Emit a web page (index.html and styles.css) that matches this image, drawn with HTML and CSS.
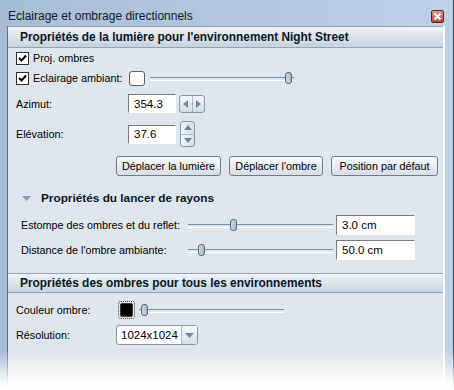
FILE: index.html
```html
<!DOCTYPE html>
<html lang="fr">
<head>
<meta charset="utf-8">
<title>Eclairage et ombrage directionnels</title>
<link rel="stylesheet" href="styles.css">
</head>
<body>
<div class="window">
  <div class="titlebar">
    <span class="title">Eclairage et ombrage directionnels</span>
    <span class="close"><svg width="9" height="9" viewBox="0 0 9 9"><path d="M1.5 1.5 L7.5 7.5 M7.5 1.5 L1.5 7.5" stroke="#fff" stroke-width="2"/></svg></span>
  </div>
  <div class="content">
    <div class="header">Propriétés de la lumière pour l'environnement Night Street</div>

    <div class="row row-check">
      <span class="checkbox"><svg width="11" height="11" viewBox="0 0 11 11"><path d="M2 5 L4.5 7.5 L9 2.5" fill="none" stroke="#000" stroke-width="2"/></svg></span>
      <span>Proj. ombres</span>
    </div>
    <div class="row row-check">
      <span class="checkbox"><svg width="11" height="11" viewBox="0 0 11 11"><path d="M2 5 L4.5 7.5 L9 2.5" fill="none" stroke="#000" stroke-width="2"/></svg></span>
      <span class="ambient-label">Eclairage ambiant:</span>
      <span class="swatch"></span>
      <span class="slider slider-ambient"><span class="thumb" style="left:135px"></span></span>
    </div>

    <div class="row row-az">
      <span class="label w112">Azimut:</span>
      <span class="field w48">354.3</span>
      <span class="spin-h">
        <span class="spin-cell"><svg width="6" height="8" viewBox="0 0 6 8"><path d="M5 0 L5 8 L0 4 Z" fill="#6d86a0"/></svg></span>
        <span class="spin-cell"><svg width="6" height="8" viewBox="0 0 6 8"><path d="M1 0 L1 8 L6 4 Z" fill="#6d86a0"/></svg></span>
      </span>
    </div>

    <div class="row row-el">
      <span class="label w112">Elévation:</span>
      <span class="field w48">37.6</span>
      <span class="spin-v">
        <span class="spin-cell"><svg width="8" height="5" viewBox="0 0 8 5"><path d="M0 5 L8 5 L4 0 Z" fill="#6d86a0"/></svg></span>
        <span class="spin-cell"><svg width="8" height="5" viewBox="0 0 8 5"><path d="M0 0 L8 0 L4 5 Z" fill="#6d86a0"/></svg></span>
      </span>
    </div>

    <div class="row row-buttons">
      <span class="btn b1">Déplacer la lumière</span>
      <span class="btn b2">Déplacer l'ombre</span>
      <span class="btn b3">Position par défaut</span>
    </div>

    <div class="row section">
      <svg class="tri" width="9" height="5" viewBox="0 0 9 5"><path d="M0 0 L9 0 L4.5 5 Z" fill="#8a9bb0"/></svg>
      <span>Propriétés du lancer de rayons</span>
    </div>

    <div class="row row-ray">
      <span class="label w167">Estompe des ombres et du reflet:</span>
      <span class="slider slider-ray"><span class="thumb" style="left:42px"></span></span>
      <span class="field w79">3.0 cm</span>
    </div>
    <div class="row row-ray row-dist">
      <span class="label w167">Distance de l'ombre ambiante:</span>
      <span class="slider slider-ray"><span class="thumb" style="left:10px"></span></span>
      <span class="field w79">50.0 cm</span>
    </div>

    <div class="header header2">Propriétés des ombres pour tous les environnements</div>

    <div class="row row-color">
      <span class="label w102">Couleur ombre:</span>
      <span class="color-focus"><span class="color-black"></span></span>
      <span class="slider slider-color"><span class="thumb" style="left:2px"></span></span>
    </div>
    <div class="row row-res">
      <span class="label w100">Résolution:</span>
      <span class="combo"><span class="combo-text">1024x1024</span><span class="combo-btn"><svg width="9" height="5" viewBox="0 0 9 5"><path d="M0 0 L9 0 L4.5 5 Z" fill="#6d86a0"/></svg></span></span>
    </div>
  </div>
  <div class="fade"></div>
</div>
</body>
</html>
```
FILE: styles.css
```css
* { box-sizing: border-box; }
html, body { margin: 0; padding: 0; }
body {
  width: 454px;
  height: 390px;
  overflow: hidden;
  background: #fff;
  font-family: "Liberation Sans", Arial, sans-serif;
  font-size: 10.8px;
  color: #000;
}
.window {
  position: relative;
  height: 390px;
  display: flex;
  flex-direction: column;
  padding: 0 8px 0 7px;
  background: linear-gradient(to right, #a6bdd6, #bcd2e9);
  border-right: 1px solid #2e4253;
}
.titlebar {
  height: 26px;
  flex: none;
  display: flex;
  align-items: flex-start;
  justify-content: space-between;
}
.title {
  font-size: 12px;
  margin: 9px 0 0 1px;
  color: #0f1a26;
}
.close {
  width: 13px;
  height: 13px;
  margin: 10px 1px 0 0;
  border: 1px solid #5e2525;
  border-radius: 2px;
  background: linear-gradient(#e0968a, #b9473b);
  display: flex;
  align-items: center;
  justify-content: center;
}
.content {
  flex: 1;
  background: #dee6ed;
  border-left: 1px solid #66727e;
  border-right: 2px solid #fff;
  display: flex;
  flex-direction: column;
}
.header {
  height: 22px;
  flex: none;
  display: flex;
  align-items: center;
  padding-left: 12px;
  font-weight: bold;
  font-size: 11.85px;
  color: #0a1624;
  background: linear-gradient(#eef2f7, #c6d4df);
  border-top: 1px solid #95a4b0;
  border-bottom: 1px solid #95a4b0;
}
.header2 {
  height: 20px;
  margin-top: 13px;
  font-size: 11.9px;
}
.row {
  display: flex;
  align-items: center;
  flex: none;
  padding-left: 8px;
  white-space: nowrap;
}
.row-check { height: 20px; }
.checkbox {
  width: 13px;
  height: 13px;
  border: 1px solid #2f2f2f;
  background: #fff;
  display: flex;
  align-items: center;
  justify-content: center;
  margin-right: 4px;
  flex: none;
}
.ambient-label { width: 96px; flex: none; }
.swatch {
  width: 16px;
  height: 15px;
  border: 1px solid #55626e;
  border-radius: 3px;
  background: #fff;
  margin-right: 5px;
  flex: none;
}
.slider {
  position: relative;
  height: 14px;
  display: block;
  flex: none;
}
.slider::before {
  content: "";
  position: absolute;
  left: 0;
  right: 0;
  top: 6px;
  height: 2px;
  border-top: 1px solid #7a92a6;
  border-bottom: 1px solid #fff;
}
.thumb {
  position: absolute;
  top: 1px;
  width: 7px;
  height: 12px;
  border: 1px solid #566a7c;
  border-radius: 3px;
  background: linear-gradient(to right, #c9d6e2, #a9bccd);
}
.slider-ambient { width: 144px; }
.label { display: block; flex: none; }
.w112 { width: 112px; }
.w167 { width: 167px; }
.w102 { width: 102px; }
.w100 { width: 100px; }
.field {
  height: 20px;
  display: flex;
  align-items: center;
  padding-left: 5px;
  background: #fff;
  border: 1px solid #fff;
  border-top-color: #7a7a7a;
  border-left-color: #7a7a7a;
  font-size: 11.5px;
  flex: none;
}
.w48 { width: 48px; height: 19px; }
.w79 { width: 79px; }
.row-az { height: 19px; margin-top: 6px; }
.spin-h {
  margin-left: 3px;
  width: 26px;
  height: 18px;
  display: flex;
  border: 1px solid #8497a8;
  border-radius: 3px;
  background: linear-gradient(#f2f5f8, #d3dde6);
}
.spin-h .spin-cell {
  flex: 1;
  display: flex;
  align-items: center;
  justify-content: center;
}
.spin-h .spin-cell + .spin-cell { border-left: 1px solid #a8b8c6; }
.row-el { height: 26px; margin-top: 8px; }
.spin-v {
  margin-left: 4px;
  width: 15px;
  height: 26px;
  display: flex;
  flex-direction: column;
  border: 1px solid #8497a8;
  border-radius: 3px;
  background: linear-gradient(to right, #f2f5f8, #d3dde6);
}
.spin-v .spin-cell {
  flex: 1;
  display: flex;
  align-items: center;
  justify-content: center;
}
.spin-v .spin-cell + .spin-cell { border-top: 1px solid #a8b8c6; }
.row-buttons {
  height: 20px;
  margin-top: 9px;
  justify-content: flex-end;
  gap: 8px;
  padding-right: 5px;
}
.btn {
  height: 20px;
  display: flex;
  align-items: center;
  justify-content: center;
  border: 1px solid #707d89;
  border-radius: 3px;
  background: linear-gradient(#fafbfc, #e6ebf0 50%, #d6dee6);
}
.b1 { width: 105px; }
.b2 { width: 94px; }
.b3 { width: 107px; }
.section {
  height: 20px;
  margin-top: 12px;
  padding-left: 14px;
  font-weight: bold;
  font-size: 11.8px;
  color: #0a1624;
}
.tri { margin-right: 10px; }
.row-ray { height: 20px; margin-top: 7px; padding-left: 13px; }
.row-dist { margin-top: 5px; }
.slider-ray { width: 145px; margin-right: 3px; }
.row-color { height: 20px; margin-top: 7px; }
.color-focus {
  width: 17px;
  height: 18px;
  border: 1px dotted #444;
  border-radius: 3px;
  display: flex;
  align-items: center;
  justify-content: center;
  flex: none;
}
.color-black {
  width: 13px;
  height: 14px;
  background: #000;
  border: 1px solid #3a3a3a;
  border-radius: 2px;
}
.slider-color { width: 145px; margin-left: 4px; }
.row-res { height: 20px; margin-top: 5px; }
.combo {
  width: 82px;
  height: 20px;
  display: flex;
  background: #fff;
  border: 1px solid #8796a4;
  border-radius: 3px;
}
.combo-text {
  flex: 1;
  display: flex;
  align-items: center;
  padding-left: 4px;
  font-size: 11.5px;
}
.combo-btn {
  width: 16px;
  display: flex;
  align-items: center;
  justify-content: center;
  border-left: 1px solid #a8b8c6;
  background: linear-gradient(#f4f6f9, #d5dee7);
}
.fade {
  position: absolute;
  left: 0;
  right: -1px;
  bottom: 0;
  height: 40px;
  background: linear-gradient(rgba(255,255,255,0), rgba(255,255,255,0.9) 80%, #fff);
  pointer-events: none;
}
```
